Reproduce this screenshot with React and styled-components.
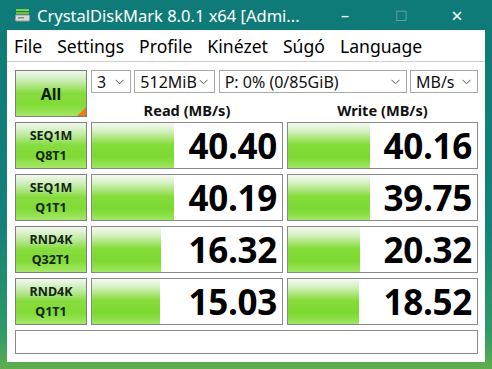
import React from 'react';
import styled, { createGlobalStyle } from 'styled-components';

const GlobalStyle = createGlobalStyle`
  html, body {
    margin: 0;
    padding: 0;
    width: 492px;
    height: 369px;
    overflow: hidden;
    background: linear-gradient(to bottom, #0f7b78 0%, #13807a 60%, #2f9a66 90%, #5fae4c 100%);
    font-family: "Noto Sans", "Open Sans", sans-serif;
  }
`;

const Window = styled.div`
  margin-left: 7px;
  width: 478px;
  height: 362px;
  display: flex;
  flex-direction: column;
  background: #ffffff;
`;

const TitleBar = styled.div`
  height: 30px;
  background: #0f7b79;
  color: #ffffff;
  display: flex;
  align-items: center;
  padding-left: 8px;
  font-size: 16.5px;
  flex-shrink: 0;
`;

const TitleText = styled.span`
  margin-left: 7px;
  flex: 1;
  white-space: nowrap;
`;

const Control = styled.span`
  width: 56px;
  text-align: center;
  font-size: ${p => p.$size || 16}px;
  opacity: ${p => (p.$dim ? 0.35 : 1)};
`;

const MenuBar = styled.div`
  height: 31px;
  border-bottom: 1px solid #d0d0d0;
  display: flex;
  align-items: center;
  gap: 15px;
  padding-left: 7px;
  font-size: 17.6px;
  color: #000;
  flex-shrink: 0;
`;

const Content = styled.div`
  padding: 8px 7px 0 8px;
  display: grid;
  grid-template-columns: 72px 192px 191px;
  grid-template-rows: 23px 19px repeat(4, 47px) 24px;
  column-gap: 4px;
  row-gap: 5px;
`;

const greenGrad = `linear-gradient(to bottom, #f2f8ee 0%, #c8ecb0 22%, #86dc3c 50%, #80da34 75%, #a6e86a 100%)`;

const AllButton = styled.div`
  grid-row: 1 / span 2;
  position: relative;
  border: 1px solid #7f7f7f;
  background: ${greenGrad};
  display: flex;
  align-items: center;
  justify-content: center;
  font-weight: 700;
  font-size: 16px;
  color: #0c1c0c;
  overflow: hidden;
`;

const Corner = styled.span`
  position: absolute;
  right: 0;
  bottom: 0;
  width: 0;
  height: 0;
  border-left: 9px solid transparent;
  border-bottom: 9px solid #ec7a1e;
`;

const Selectors = styled.div`
  grid-column: 2 / span 2;
  display: flex;
  justify-content: space-between;
`;

const Select = styled.div`
  width: ${p => p.$w}px;
  box-sizing: border-box;
  border: 1px solid #a8a8a8;
  display: flex;
  align-items: center;
  justify-content: space-between;
  padding: 0 6px 0 5px;
  font-size: 16px;
  color: #111;
  white-space: nowrap;
`;

const Chevron = () => (
  <svg width="9" height="6" viewBox="0 0 9 6">
    <path d="M0.5 0.8 L4.5 4.8 L8.5 0.8" fill="none" stroke="#555" strokeWidth="1" />
  </svg>
);

const Header = styled.div`
  grid-column: ${p => p.$col};
  font-weight: 700;
  font-size: 14.6px;
  display: flex;
  align-items: center;
  justify-content: center;
  color: #111;
  padding-top: 4px;
`;

const Label = styled.div`
  border: 1px solid #7f7f7f;
  background: ${greenGrad};
  display: flex;
  flex-direction: column;
  align-items: center;
  justify-content: center;
  font-weight: 700;
  font-size: 12.5px;
  line-height: 20px;
  color: #142414;
`;

const Cell = styled.div`
  position: relative;
  border: 1px solid #8a8a8a;
  display: flex;
  align-items: center;
  justify-content: flex-end;
  padding-right: 5px;
  overflow: hidden;
`;

const Bar = styled.div`
  position: absolute;
  left: 0;
  top: 0;
  bottom: 0;
  background: linear-gradient(to bottom, #f6faf2 0%, #d4f0c0 18%, #84dc38 48%, #7cd830 75%, #9ee660 100%);
`;

const Value = styled.span`
  position: relative;
  font-family: "Open Sans", "Noto Sans", sans-serif;
  font-weight: 700;
  font-size: 35px;
  letter-spacing: -0.3px;
  color: #000;
`;

const Status = styled.div`
  grid-column: 1 / span 3;
  border: 1px solid #8a8a8a;
`;

const rows = [
  { a: 'SEQ1M', b: 'Q8T1', r: '40.40', rw: 82, w: '40.16', ww: 82 },
  { a: 'SEQ1M', b: 'Q1T1', r: '40.19', rw: 82, w: '39.75', ww: 82 },
  { a: 'RND4K', b: 'Q32T1', r: '16.32', rw: 69, w: '20.32', ww: 72 },
  { a: 'RND4K', b: 'Q1T1', r: '15.03', rw: 68, w: '18.52', ww: 71 },
];

const DiskIcon = () => (
  <svg width="15" height="14" viewBox="0 0 15 14">
    <rect x="1" y="1" width="13" height="2" fill="#7fd23a" />
    <rect x="1" y="4" width="13" height="2" fill="#6cc22c" />
    <rect x="0.5" y="7" width="14" height="6" rx="1" fill="#d8d8d8" stroke="#9a9a9a" />
    <rect x="3" y="9" width="6" height="1.5" fill="#8a8a8a" />
  </svg>
);

export default function App() {
  return (
    <>
      <GlobalStyle />
      <Window>
        <TitleBar>
          <DiskIcon />
          <TitleText>CrystalDiskMark 8.0.1 x64 [Admi...</TitleText>
          <Control>&#8211;</Control>
          <Control $dim $size={14}>&#9744;</Control>
          <Control $size={20}>&#215;</Control>
        </TitleBar>
        <MenuBar>
          <span>File</span>
          <span>Settings</span>
          <span>Profile</span>
          <span>Kinézet</span>
          <span>Súgó</span>
          <span>Language</span>
        </MenuBar>
        <Content>
          <AllButton>
            All
            <Corner />
          </AllButton>
          <Selectors>
            <Select $w={40}>3<Chevron /></Select>
            <Select $w={81}>512MiB<Chevron /></Select>
            <Select $w={188}>P: 0% (0/85GiB)<Chevron /></Select>
            <Select $w={68}>MB/s<Chevron /></Select>
          </Selectors>
          <Header $col={2}>Read (MB/s)</Header>
          <Header $col={3}>Write (MB/s)</Header>
          {rows.map((row, i) => (
            <React.Fragment key={i}>
              <Label>
                <span>{row.a}</span>
                <span>{row.b}</span>
              </Label>
              <Cell>
                <Bar style={{ width: row.rw }} />
                <Value>{row.r}</Value>
              </Cell>
              <Cell>
                <Bar style={{ width: row.ww }} />
                <Value>{row.w}</Value>
              </Cell>
            </React.Fragment>
          ))}
          <Status />
        </Content>
      </Window>
    </>
  );
}
